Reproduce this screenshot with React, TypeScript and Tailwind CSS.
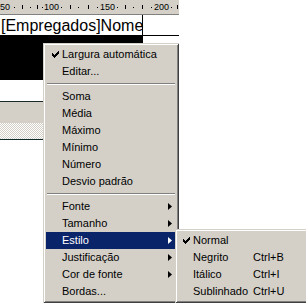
import React from 'react';

type Item =
  | { kind: 'sep' }
  | { kind: 'item'; label: string; checked?: boolean; sub?: boolean; active?: boolean };

const items: Item[] = [
  { kind: 'item', label: 'Largura automática', checked: true },
  { kind: 'item', label: 'Editar...' },
  { kind: 'sep' },
  { kind: 'item', label: 'Soma' },
  { kind: 'item', label: 'Média' },
  { kind: 'item', label: 'Máximo' },
  { kind: 'item', label: 'Mínimo' },
  { kind: 'item', label: 'Número' },
  { kind: 'item', label: 'Desvio padrão' },
  { kind: 'sep' },
  { kind: 'item', label: 'Fonte', sub: true },
  { kind: 'item', label: 'Tamanho', sub: true },
  { kind: 'item', label: 'Estilo', sub: true, active: true },
  { kind: 'item', label: 'Justificação', sub: true },
  { kind: 'item', label: 'Cor de fonte', sub: true },
  { kind: 'item', label: 'Bordas...' },
];

const styles = [
  { label: 'Normal', checked: true, key: '' },
  { label: 'Negrito', key: 'Ctrl+B' },
  { label: 'Itálico', key: 'Ctrl+I' },
  { label: 'Sublinhado', key: 'Ctrl+U' },
];

// ruler marks: labels every 50 units, dots and ticks in between
const rulerLabels = [
  { text: '50', x: 0 },
  { text: '100', x: 44 },
  { text: '150', x: 100 },
  { text: '200', x: 154 },
];
const rulerDots = [14, 30, 42, 61, 78, 97, 117, 133, 151, 171];
const rulerTicks = [22, 37, 70, 88, 125, 142, 177];

function Check({ white }: { white?: boolean }) {
  return (
    <svg width="7" height="7" viewBox="0 0 7 7" className="block">
      <path d="M0 2h1v1h1v1h1V3h1V2h1V1h1V0h1v3h-1v1h-1v1h-1v1h-1v1H2V6H1V5H0z" fill={white ? '#fff' : '#000'} />
    </svg>
  );
}

function Arrow({ white }: { white?: boolean }) {
  return (
    <svg width="4" height="7" viewBox="0 0 4 7" className="block">
      <path d="M0 0L4 3.5L0 7z" fill={white ? '#fff' : '#000'} />
    </svg>
  );
}

const menuBox =
  'bg-[#d4d0c8] p-[3px] shadow-[inset_1px_1px_0_#d4d0c8,inset_-1px_-1px_0_#404040,inset_2px_2px_0_#ffffff,inset_-2px_-2px_0_#808080]';

export default function App() {
  return (
    <div className="relative w-[306px] h-[305px] overflow-hidden bg-white font-['Liberation_Sans',Arial,sans-serif] text-black">
      {/* ruler */}
      <div className="relative h-[15px] w-[179px] bg-[#d4d0c8] border-b border-[#808080]">
        {rulerLabels.map((l) => (
          <span key={l.text} className="absolute top-[2px] text-[9px] leading-[10px]" style={{ left: l.x }}>
            {l.text}
          </span>
        ))}
        {rulerDots.map((x) => (
          <span key={'d' + x} className="absolute top-[7px] w-px h-px bg-black" style={{ left: x }} />
        ))}
        {rulerTicks.map((x) => (
          <span key={'t' + x} className="absolute top-[5px] w-px h-[4px] bg-black" style={{ left: x }} />
        ))}
      </div>

      {/* selected text box */}
      <div className="flex h-[21px] w-[179px] border-b border-black">
        <div className="w-[143px] border-r border-black pl-[1px] pt-[1px] text-[16px] leading-[19px] whitespace-nowrap">
          [Empregados]Nome
        </div>
      </div>
      <div className="h-[44px] w-[143px] bg-black" />
      <div className="h-[22px] w-[179px] border-b border-[#1b2b2b]" />
      <div className="h-[21px] w-[179px] bg-[#d4d0c8]" />
      <div className="h-[16px] w-[179px] bg-[repeating-conic-gradient(#d4d0c8_0_25%,#ffffff_0_50%)] bg-[length:2px_2px]" />
      <div className="h-px w-[179px] bg-[#0f2a2a]" />

      {/* context menu */}
      <div className={'absolute left-[43px] top-[43px] w-[136px] text-[11px] ' + menuBox}>
        {items.map((it, i) =>
          it.kind === 'sep' ? (
            <div key={i} className="h-[8px] flex flex-col justify-center px-px">
              <div className="h-px bg-[#808080]" />
              <div className="h-px bg-white" />
            </div>
          ) : (
            <div
              key={i}
              className={
                'flex h-[17px] items-center ' + (it.active ? 'bg-[#0a246a] text-white' : '')
              }
            >
              <span className="w-[16px] flex justify-center pl-[2px]">{it.checked && <Check />}</span>
              <span className="flex-1 whitespace-nowrap leading-[17px]">{it.label}</span>
              {it.sub && (
                <span className="mr-[4px]">
                  <Arrow white={it.active} />
                </span>
              )}
            </div>
          )
        )}
      </div>

      {/* submenu */}
      <div className={'absolute left-[175px] top-[229px] w-[140px] text-[11px] ' + menuBox}>
        {styles.map((s) => (
          <div key={s.label} className="flex h-[17px] items-center">
            <span className="w-[15px] flex justify-center pl-[1px]">{s.checked && <Check />}</span>
            <span className="w-[60px] whitespace-nowrap leading-[17px]">{s.label}</span>
            <span className="whitespace-nowrap leading-[17px]">{s.key}</span>
          </div>
        ))}
      </div>
    </div>
  );
}
